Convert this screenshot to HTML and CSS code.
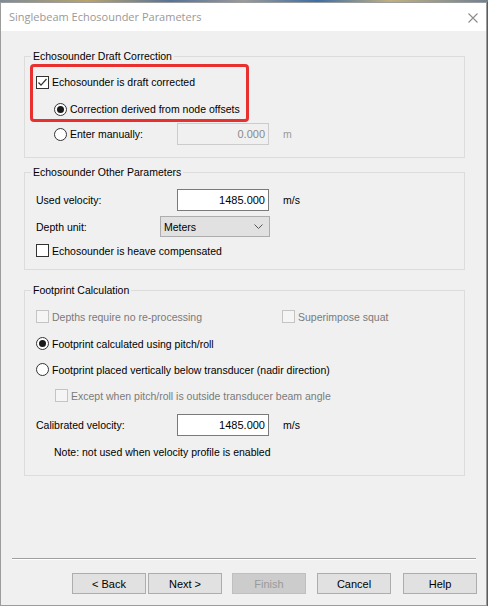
FILE: index.html
```html
<!DOCTYPE html>
<html>
<head>
<meta charset="utf-8">
<link rel="stylesheet" href="styles.css">
</head>
<body>
<div class="desk"></div>
<div class="window">
  <div class="titlebar">
    <span class="title">Singlebeam Echosounder Parameters</span>
    <svg class="close" width="10" height="10" viewBox="0 0 10 10"><path d="M0.5 0.5 L9.5 9.5 M9.5 0.5 L0.5 9.5" stroke="#8c8c8c" stroke-width="1.1" fill="none"/></svg>
  </div>
  <div class="body">
    <fieldset class="group g1">
      <legend>Echosounder Draft Correction</legend>
      <div class="row r-chk">
        <span class="box"><svg width="11" height="11" viewBox="0 0 11 11"><path d="M1.5 5.5 L4 8.2 L9.5 2" stroke="#333" stroke-width="1.2" fill="none"/></svg></span>
        <span class="txt">Echosounder is draft corrected</span>
      </div>
      <div class="row r-radio1 indent">
        <span class="radio on"></span>
        <span class="txt">Correction derived from node offsets</span>
      </div>
      <div class="row r-field">
        <div class="lead indent"><span class="radio"></span><span class="txt">Enter manually:</span></div>
        <div class="input disabled">0.000</div>
        <span class="unit dim">m</span>
      </div>
    </fieldset>

    <fieldset class="group g2">
      <legend>Echosounder Other Parameters</legend>
      <div class="row r-vel">
        <div class="lead"><span class="txt">Used velocity:</span></div>
        <div class="input">1485.000</div>
        <span class="unit">m/s</span>
      </div>
      <div class="row r-depth">
        <div class="lead short"><span class="txt">Depth unit:</span></div>
        <div class="combo"><span>Meters</span><svg width="9" height="5" viewBox="0 0 9 5"><path d="M0.5 0.5 L4.5 4.5 L8.5 0.5" stroke="#555" stroke-width="1" fill="none"/></svg></div>
      </div>
      <div class="row r-heave">
        <span class="box"></span>
        <span class="txt">Echosounder is heave compensated</span>
      </div>
    </fieldset>

    <fieldset class="group g3">
      <legend>Footprint Calculation</legend>
      <div class="row r-dis">
        <div class="lead wide"><span class="box off"></span><span class="txt dim">Depths require no re-processing</span></div>
        <span class="box off"></span><span class="txt dim">Superimpose squat</span>
      </div>
      <div class="row r-pr">
        <span class="radio on"></span>
        <span class="txt">Footprint calculated using pitch/roll</span>
      </div>
      <div class="row r-nadir">
        <span class="radio"></span>
        <span class="txt">Footprint placed vertically below transducer (nadir direction)</span>
      </div>
      <div class="row r-except indent2">
        <span class="box off"></span>
        <span class="txt dim">Except when pitch/roll is outside transducer beam angle</span>
      </div>
      <div class="row r-cal">
        <div class="lead"><span class="txt">Calibrated velocity:</span></div>
        <div class="input">1485.000</div>
        <span class="unit">m/s</span>
      </div>
      <div class="row r-note indent">
        <span class="txt">Note: not used when velocity profile is enabled</span>
      </div>
    </fieldset>

    <div class="sep"></div>
    <div class="buttons">
      <button class="btn b-back">&lt; Back</button>
      <button class="btn b-next">Next &gt;</button>
      <button class="btn b-finish" disabled>Finish</button>
      <button class="btn b-cancel">Cancel</button>
      <button class="btn b-help">Help</button>
    </div>
  </div>
  <div class="highlight"></div>
</div>
</body>
</html>
```

FILE: styles.css
```css
* { box-sizing: border-box; }
html, body { margin: 0; padding: 0; }
body {
  width: 488px;
  height: 606px;
  overflow: hidden;
  background: #4f5f70;
  font-family: "Liberation Sans", Arial, sans-serif;
  font-size: 10.5px;
  color: #000;
}
.desk {
  height: 2px;
  background: linear-gradient(90deg, #7d8b99 0%, #b9a36a 18%, #55739a 35%, #9a9a9a 50%, #3d6ea6 65%, #c0b080 80%, #6f8193 100%);
}
.window {
  position: relative;
  width: 487px;
  height: 604px;
  border: 1px solid #9c9c9c;
  background: #f0f0f0;
  display: flex;
  flex-direction: column;
}
.titlebar {
  height: 28px;
  flex: none;
  background: #fff;
  display: flex;
  align-items: center;
  justify-content: space-between;
  padding: 0 8px 0 8px;
}
.title {
  font-family: "Open Sans", "Noto Sans", sans-serif;
  font-size: 11px;
  color: #999;
  margin-top: -1px;
}
.close { display: block; margin-top: 1px; }

.body {
  padding: 18px 0 0 23px;
  display: flex;
  flex-direction: column;
  flex: 1;
}
.group {
  width: 441px;
  margin: 0;
  border: 1px solid #dcdcdc;
  padding: 0 11px;
  display: flex;
  flex-direction: column;
  min-width: 0;
}
.group legend {
  padding: 0 2px;
  margin-left: -5px;
  line-height: 14px;
  height: 14px;
}
.g1 { padding-top: 12px; padding-bottom: 12px; }
.g2 { margin-top: 7px; padding-top: 10px; padding-bottom: 12px; }
.g3 { margin-top: 13px; padding-top: 13px; padding-bottom: 16px; }

.row {
  display: flex;
  align-items: center;
  height: 14px;
}
.indent { margin-left: 18px; }
.indent2 { margin-left: 19px; }
.txt { line-height: 14px; white-space: nowrap; }
.dim { color: #7a7a7a; }

.box {
  width: 13px;
  height: 13px;
  flex: none;
  border: 1px solid #333;
  background: #fff;
  margin-right: 3px;
  display: flex;
  align-items: center;
  justify-content: center;
}
.box.off { border-color: #c4c4c4; background: #f5f5f5; }
.box svg { display: block; }
.radio {
  width: 13px;
  height: 13px;
  flex: none;
  border: 1px solid #333;
  border-radius: 50%;
  background: #fff;
  margin-right: 3px;
  display: flex;
  align-items: center;
  justify-content: center;
}
.radio.on::after {
  content: "";
  width: 7px;
  height: 7px;
  border-radius: 50%;
  background: #1a1a1a;
}

.lead { width: 141px; flex: none; display: flex; align-items: center; }
.lead.indent { width: 123px; }
.lead.short { width: 124px; }
.lead.wide { width: 246px; }

.input {
  width: 92px;
  height: 22px;
  flex: none;
  border: 1px solid #7a7a7a;
  background: #fff;
  text-align: right;
  padding-right: 3px;
  line-height: 20px;
  font-size: 11px;
}
.input.disabled { border-color: #cccccc; background: #f0f0f0; color: #8a8a8a; }
.unit { margin-left: 14px; }
.unit.dim { color: #9a9a9a; }

.combo {
  width: 110px;
  height: 21px;
  border: 1px solid #adadad;
  background: #e1e1e1;
  display: flex;
  align-items: center;
  justify-content: space-between;
  padding: 0 6px 0 3px;
}
.combo svg { display: block; }

.r-chk { margin-top: 0; }
.r-radio1 { margin-top: 13px; }
.r-field { margin-top: 7px; height: 22px; }
.r-vel { height: 22px; }
.r-depth { margin-top: 5px; height: 21px; }
.r-heave { margin-top: 7px; height: 13px; }
.r-dis { height: 13px; }
.r-pr { margin-top: 14px; height: 13px; }
.r-nadir { margin-top: 13px; height: 13px; }
.r-except { margin-top: 13px; height: 13px; }
.r-cal { margin-top: 12px; height: 22px; }
.r-note { margin-top: 9px; }

.sep {
  margin: 82px 10px 0 -12px;
  height: 2px;
  border-top: 1px solid #a0a0a0;
  border-bottom: 1px solid #ffffff;
}
.buttons {
  display: flex;
  margin-top: 13px;
  padding-left: 48px;
}
.btn {
  width: 74px;
  height: 21px;
  border: 1px solid #adadad;
  background: #e1e1e1;
  font-family: "Liberation Sans", Arial, sans-serif;
  font-size: 11px;
  color: #000;
  padding: 0;
  margin: 0;
}
.b-next { margin-left: 2px; }
.b-finish { margin-left: 10px; background: #cccccc; border-color: #bfbfbf; color: #9a9a9a; }
.b-cancel { margin-left: 11px; }
.b-help { margin-left: 12px; }

.highlight {
  position: absolute;
  left: 29px;
  top: 61px;
  width: 219px;
  height: 58px;
  border: 3px solid #e8302f;
  border-radius: 4px;
}
```
